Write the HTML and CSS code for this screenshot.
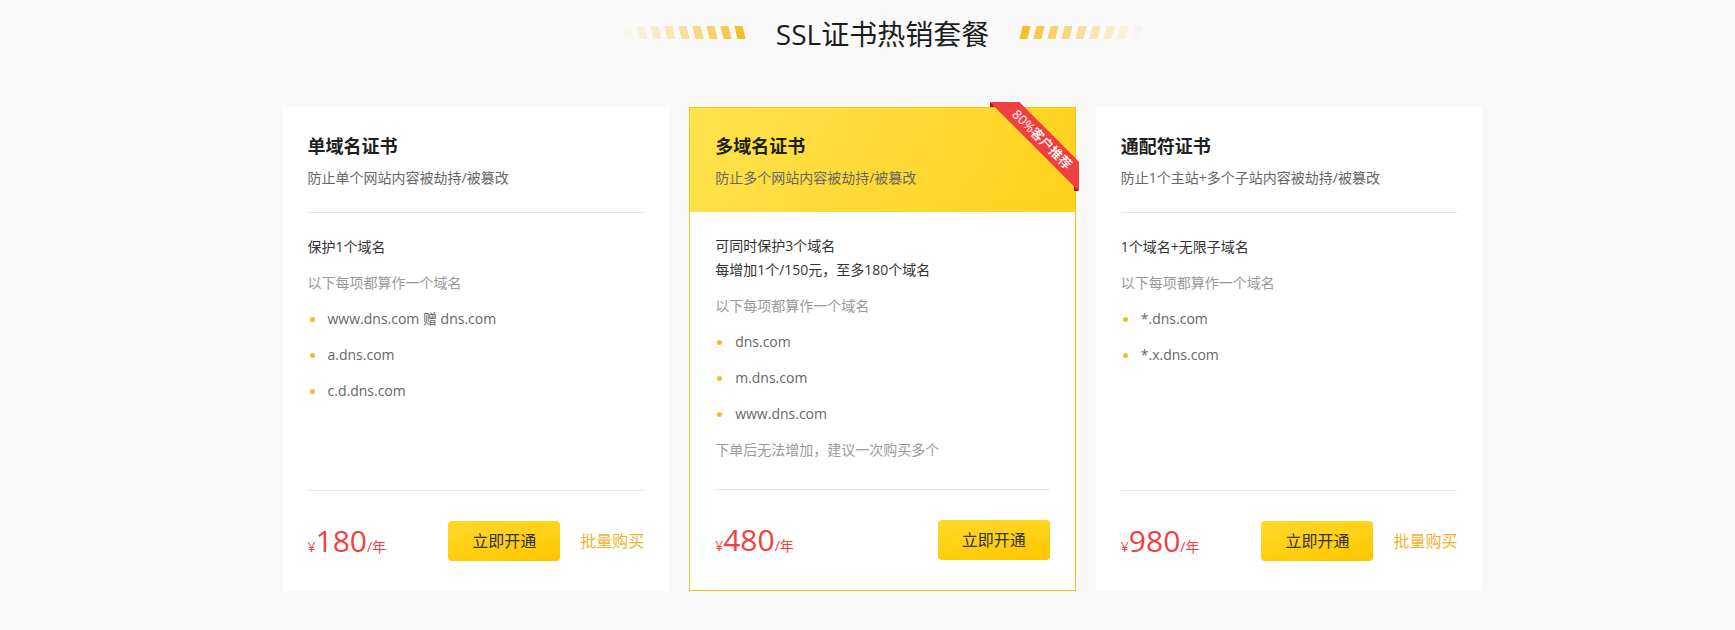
FILE: index.html
```html
<!DOCTYPE html>
<html lang="zh-CN">
<head>
<meta charset="utf-8">
<title>SSL证书热销套餐</title>
<link rel="stylesheet" href="styles.css">
</head>
<body>
<div class="wrap">
  <div class="heading">
    <div class="stripes stripes-left"><i></i><i></i><i></i><i></i><i></i><i></i><i></i><i></i><i></i></div>
    <h2 class="heading-title">SSL证书热销套餐</h2>
    <div class="stripes stripes-right"><i></i><i></i><i></i><i></i><i></i><i></i><i></i><i></i><i></i></div>
  </div>

  <div class="cards">
    <div class="card">
      <div class="card-head">
        <div class="card-head-inner">
          <h3 class="card-title">单域名证书</h3>
          <p class="card-sub">防止单个网站内容被劫持/被篡改</p>
        </div>
      </div>
      <div class="card-body">
        <p class="feat">保护1个域名</p>
        <p class="hint">以下每项都算作一个域名</p>
        <ul class="domains">
          <li>www.dns.com 赠 dns.com</li>
          <li>a.dns.com</li>
          <li>c.d.dns.com</li>
        </ul>
      </div>
      <div class="card-foot">
        <div class="price"><span class="cur">¥</span>180<span class="unit">/年</span></div>
        <div class="actions">
          <a class="btn" href="#">立即开通</a>
          <a class="bulk" href="#">批量购买</a>
        </div>
      </div>
    </div>

    <div class="card card-featured">
      <div class="ribbon"><span class="ribbon-band">80%客户推荐</span></div>
      <div class="card-head">
        <div class="card-head-inner">
          <h3 class="card-title">多域名证书</h3>
          <p class="card-sub">防止多个网站内容被劫持/被篡改</p>
        </div>
      </div>
      <div class="card-body">
        <p class="feat">可同时保护3个域名<br>每增加1个/150元，至多180个域名</p>
        <p class="hint">以下每项都算作一个域名</p>
        <ul class="domains">
          <li>dns.com</li>
          <li>m.dns.com</li>
          <li>www.dns.com</li>
        </ul>
        <p class="hint">下单后无法增加，建议一次购买多个</p>
      </div>
      <div class="card-foot">
        <div class="price"><span class="cur">¥</span>480<span class="unit">/年</span></div>
        <div class="actions">
          <a class="btn" href="#">立即开通</a>
        </div>
      </div>
    </div>

    <div class="card">
      <div class="card-head">
        <div class="card-head-inner">
          <h3 class="card-title">通配符证书</h3>
          <p class="card-sub">防止1个主站+多个子站内容被劫持/被篡改</p>
        </div>
      </div>
      <div class="card-body">
        <p class="feat">1个域名+无限子域名</p>
        <p class="hint">以下每项都算作一个域名</p>
        <ul class="domains">
          <li>*.dns.com</li>
          <li>*.x.dns.com</li>
        </ul>
      </div>
      <div class="card-foot">
        <div class="price"><span class="cur">¥</span>980<span class="unit">/年</span></div>
        <div class="actions">
          <a class="btn" href="#">立即开通</a>
          <a class="bulk" href="#">批量购买</a>
        </div>
      </div>
    </div>
  </div>
</div>
</body>
</html>
```

FILE: styles.css
```css
html, body {
  margin: 0;
  padding: 0;
}

body {
  background: #f9f9f9;
  font-family: "Open Sans", "Noto Sans CJK SC", sans-serif;
  color: #333;
}

.wrap {
  width: 1200px;
  margin-left: calc(50% - 585px);
}

/* heading */
.heading {
  display: flex;
  justify-content: center;
  align-items: center;
  gap: 32px;
  padding-top: 14px;
  height: 40px;
}

.heading-title {
  margin: 0;
  font-size: 28px;
  line-height: 40px;
  font-weight: 400;
  color: #1c1c1c;
}

.stripes {
  display: flex;
  gap: 6px;
  margin-top: -3px;
}

.stripes i {
  display: block;
  width: 8px;
  height: 13px;
  background: #f5bf28;
  transform: skewX(14deg);
}

.stripes-right i {
  transform: skewX(-14deg);
}

.stripes-left i:nth-child(1) { opacity: 0.06; }
.stripes-left i:nth-child(2) { opacity: 0.14; }
.stripes-left i:nth-child(3) { opacity: 0.24; }
.stripes-left i:nth-child(4) { opacity: 0.34; }
.stripes-left i:nth-child(5) { opacity: 0.45; }
.stripes-left i:nth-child(6) { opacity: 0.56; }
.stripes-left i:nth-child(7) { opacity: 0.68; }
.stripes-left i:nth-child(8) { opacity: 0.82; }
.stripes-left i:nth-child(9) { opacity: 1; }

.stripes-right i:nth-child(1) { opacity: 1; }
.stripes-right i:nth-child(2) { opacity: 0.82; }
.stripes-right i:nth-child(3) { opacity: 0.68; }
.stripes-right i:nth-child(4) { opacity: 0.56; }
.stripes-right i:nth-child(5) { opacity: 0.45; }
.stripes-right i:nth-child(6) { opacity: 0.34; }
.stripes-right i:nth-child(7) { opacity: 0.24; }
.stripes-right i:nth-child(8) { opacity: 0.14; }
.stripes-right i:nth-child(9) { opacity: 0.06; }

/* cards */
.cards {
  display: grid;
  grid-template-columns: repeat(3, 1fr);
  gap: 20px;
  margin-top: 53px;
}

.card {
  position: relative;
  box-sizing: border-box;
  height: 484px;
  background: #fff;
  display: flex;
  flex-direction: column;
}

.card-featured {
  border: 1px solid #f2c514;
}

.card-head {
  padding: 0 25px;
}

.card-head-inner {
  padding: 27px 0 24px;
  border-bottom: 1px solid #e6e6e6;
}

.card-featured .card-head {
  background: linear-gradient(120deg, #ffe24f 0%, #ffd21c 100%);
}

.card-featured .card-head-inner {
  border-bottom: none;
  padding-top: 26px;
}

.card-title {
  margin: 0;
  font-size: 18px;
  line-height: 24px;
  font-weight: 700;
  color: #1f1f1f;
}

.card-sub {
  margin: 10px 0 0;
  font-size: 14px;
  line-height: 20px;
  color: #666;
}

.card-body {
  flex: 1;
  padding: 22px 25px 0;
}

.card-body > * {
  margin: 0;
}

.card-body > * + * {
  margin-top: 12px;
}

.feat {
  font-size: 14px;
  line-height: 24px;
  color: #333;
}

.hint {
  font-size: 14px;
  line-height: 24px;
  color: #999;
}

.domains {
  list-style: none;
  padding: 0;
}

.domains li {
  position: relative;
  padding-left: 20px;
  font-size: 14px;
  line-height: 24px;
  color: #666;
}

.domains li + li {
  margin-top: 12px;
}

.domains li::before {
  content: "";
  position: absolute;
  left: 2px;
  top: 10px;
  width: 5px;
  height: 5px;
  border-radius: 50%;
  background: #f6bb2b;
}

.card-foot {
  margin: 0 25px;
  border-top: 1px solid #e6e6e6;
  padding: 30px 0;
  display: flex;
  justify-content: space-between;
  align-items: center;
}

.price {
  color: #f2403e;
  font-size: 30px;
  line-height: 40px;
}

.price .cur,
.price .unit {
  font-size: 14px;
  line-height: 1;
}

.actions {
  display: flex;
  align-items: center;
  gap: 20px;
}

.btn {
  display: block;
  width: 112px;
  height: 40px;
  line-height: 40px;
  text-align: center;
  border-radius: 4px;
  background: linear-gradient(170deg, #ffda2a 0%, #ffc600 100%);
  color: #333;
  font-size: 16px;
  text-decoration: none;
}

.bulk {
  color: #f2b12c;
  font-size: 16px;
  line-height: 40px;
  text-decoration: none;
}

/* corner ribbon */
.ribbon {
  position: absolute;
  top: -6px;
  right: -4px;
  width: 89px;
  height: 89px;
  overflow: hidden;
}

.ribbon::before,
.ribbon::after {
  content: "";
  position: absolute;
  width: 5px;
  height: 5px;
  background: #a9151b;
}

.ribbon::before {
  left: 0;
  top: 0;
}

.ribbon::after {
  right: 0;
  bottom: 0;
}

.ribbon-band {
  position: absolute;
  z-index: 1;
  left: -18px;
  top: 27px;
  width: 140px;
  height: 21px;
  line-height: 21px;
  transform: rotate(45deg);
  background: #f13f3f;
  color: #fff;
  font-size: 13px;
  font-weight: 500;
  text-align: center;
}
```
